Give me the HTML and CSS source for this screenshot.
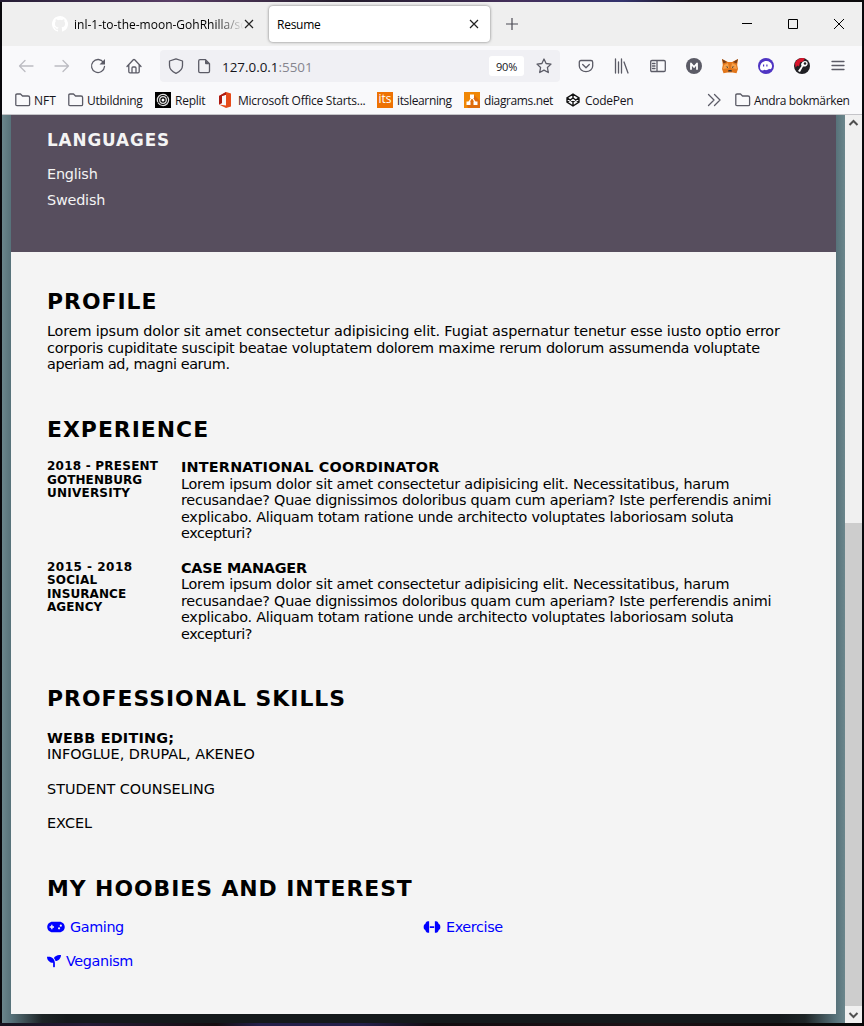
FILE: index.html
```html
<!DOCTYPE html>
<html lang="sv">
<head>
<meta charset="utf-8">
<title>Resume</title>
<link rel="stylesheet" href="styles.css">
</head>
<body>
<div class="window">
  <div class="tabs">
    <div class="tab tab-old">
      <svg class="gh" width="16" height="16" viewBox="0 0 16 16"><path fill="#fff" d="M8 0C3.58 0 0 3.58 0 8c0 3.54 2.29 6.53 5.47 7.59.4.07.55-.17.55-.38v-1.49c-2.23.49-2.7-.95-2.7-.95-.36-.92-.89-1.17-.89-1.17-.73-.5.06-.49.06-.49.8.06 1.22.83 1.22.83.72 1.23 1.88.87 2.34.67.07-.52.28-.87.5-1.07-1.77-.2-3.64-.89-3.64-3.95 0-.87.31-1.59.82-2.15-.08-.2-.36-1.02.08-2.12 0 0 .67-.21 2.2.82a7.7 7.7 0 0 1 4 0c1.53-1.04 2.2-.82 2.2-.82.44 1.1.16 1.92.08 2.12.51.56.82 1.27.82 2.15 0 3.07-1.87 3.75-3.65 3.95.29.25.54.73.54 1.48v2.2c0 .21.15.46.55.38A8 8 0 0 0 8 0z"/></svg>
      <span class="tab-title fade">inl-1-to-the-moon-GohRhilla/sc</span>
      <svg class="x" width="10" height="10" viewBox="0 0 10 10"><path d="M1 1l8 8M9 1L1 9"/></svg>
    </div>
    <div class="tab tab-active">
      <span class="tab-title">Resume</span>
      <svg class="x" width="10" height="10" viewBox="0 0 10 10"><path d="M1 1l8 8M9 1L1 9"/></svg>
    </div>
    <svg class="plus" width="12" height="12" viewBox="0 0 12 12"><path d="M6 0v12M0 6h12"/></svg>
    <div class="controls">
      <svg width="10" height="10" viewBox="0 0 10 10"><path d="M0 4.500h10"/></svg>
      <svg width="10" height="10" viewBox="0 0 10 10"><path d="M.5 .5h9v9h-9z"/></svg>
      <svg width="10" height="10" viewBox="0 0 10 10"><path d="M0 0l10 10M10 0L0 10"/></svg>
    </div>
  </div>
  <div class="nav">
    <svg class="ic dim" viewBox="0 0 16 16"><path d="M15 8H1.500M7 2.500L1.500 8 7 13.500"/></svg>
    <svg class="ic dim" viewBox="0 0 16 16"><path d="M1 8h13.500M9 2.500L14.500 8 9 13.500"/></svg>
    <svg class="ic" viewBox="0 0 16 16"><path d="M13.500 4.500A6.500 6.500 0 1 0 14.500 8.500"/><path class="solid" d="M15 1v5.500H9.500z"/></svg>
    <svg class="ic" viewBox="0 0 16 16"><path d="M1 8.500L7.300 1.800q.7-.6 1.400 0L15 8.500M2.800 7v6.500q0 1.300 1.200 1.300h8q1.200 0 1.200-1.300V7M6 14.500V10q0-1 1-1h2q1 0 1 1v4.500"/></svg>
    <div class="url">
      <svg class="ic" viewBox="0 0 16 16"><path d="M8 .8L14.500 3v4.500q0 5-6.500 7.800Q1.500 12.500 1.500 7.500V3z"/></svg>
      <svg class="ic" viewBox="0 0 16 16"><path d="M9.500 1.600H4q-1.300 0-1.300 1.300v10.400q0 1.300 1.300 1.300h8.200q1.300 0 1.300-1.300V5.600z"/><path class="solid" d="M9 1.500l4.800 4.800H10q-1 0-1-1z"/></svg>
      <span class="addr">127.0.0.1<i>:5501</i></span>
      <span class="zoom">90%</span>
      <svg class="ic" viewBox="0 0 16 16"><path d="M8 1l2.100 4.500 4.900.6-3.600 3.400.9 5L8 12.100l-4.300 2.400.9-5L1 6.100l4.900-.6z"/></svg>
    </div>
    <div class="tools">
      <svg class="ic" viewBox="0 0 16 16"><path d="M3 2.500h10q1.700 0 1.700 1.700V8a6.700 5.700 0 0 1-13.400 0V4.200q0-1.700 1.700-1.700zM4.700 6.500L8 9.700l3.300-3.200"/></svg>
      <svg class="ic" viewBox="0 0 16 16"><path d="M1.500 1v14M4.500 4v11M7.500 1v14M10 4l4 11"/></svg>
      <svg class="ic" viewBox="0 0 16 16"><path d="M2 2.500h12q1.300 0 1.300 1.300v8.400q0 1.300-1.300 1.300H2q-1.300 0-1.300-1.300V3.800q0-1.300 1.300-1.300zM7 2.500v11M2.500 5.500h2.500M2.500 8h2.500M2.500 10.500h2.500"/></svg>
      <svg class="ic" viewBox="0 0 16 16"><circle class="solid" cx="8" cy="8" r="8"/><path class="em" d="M5 11V5.500L8 9l3-3.500V11"/></svg>
      <svg class="ic art" viewBox="0 0 16 16"><path fill="#e2761b" d="M0 1l6 3h4l6-3-.8 6 .8 4-1.500 4.300-4-.8H5.500l-4 .8L0 11l.8-4z"/><path fill="#783d16" d="M0 1l5 3-3.500 1.500zM16 1l-5 3 3.500 1.500z"/><path fill="#f6a04a" d="M2 7l4-2 1 5-6 1zM14 7l-4-2-1 5 6 1z"/><path fill="#333" d="M3.500 8.500l2.500.2v1.200zM12.500 8.500l-2.500.2v1.200zM6.500 12h3l.5 1.500H6z"/></svg>
      <svg class="ic art" viewBox="0 0 16 16"><circle cx="8" cy="8" r="8" fill="#4f35c3"/><path fill="#fff" d="M2 9.500C2 1.500 13 1 14 7.500c.2 3.500-1.800 4.500-3 3.300-1.500 1.700-3.500 1.700-4.500 1-2 1.500-4.500.7-4.500-2.300z"/><path fill="#4f35c3" d="M5 6.500h1.200v2H5zM8.300 6.500h1.200v2H8.300z"/></svg>
      <svg class="ic art" viewBox="0 0 16 16"><circle cx="8" cy="8" r="8" fill="#202024"/><path fill="#d9142b" d="M1 5a8 8 0 0 1 10-4.500L9 3.500l-3 1-1 4-1.500-1-2 2z"/><path fill="#fff" d="M7 6q2-4 6-2.500 2 3-1.500 5L9 8.500 6 14l-2-1 3.500-5z"/><circle cx="11" cy="5.500" r="1.300" fill="#202024"/></svg>
      <svg class="ic" viewBox="0 0 16 16"><path d="M2 3.500h12M2 7.500h12M2 11.500h12"/></svg>
    </div>
  </div>
  <div class="marks">
    <span class="bm b1"><svg class="ic" viewBox="0 0 16 16"><path d="M.8 12.500V3.200q0-1.200 1.200-1.200h3.500L7.500 4H13q1.600 0 1.600 1.500v7q0 1.200-1.300 1.200H2q-1.200 0-1.200-1.200z"/></svg><b>NFT</b></span>
    <span class="bm b2"><svg class="ic" viewBox="0 0 16 16"><path d="M.8 12.500V3.200q0-1.200 1.200-1.200h3.500L7.500 4H13q1.600 0 1.600 1.500v7q0 1.200-1.300 1.200H2q-1.200 0-1.200-1.200z"/></svg><b>Utbildning</b></span>
    <span class="bm b3"><svg class="ic art" viewBox="0 0 16 16"><path fill="#000" d="M0 0h16v16H0z"/><g fill="none" stroke="#ddd" stroke-width="1.300"><circle cx="8" cy="8" r="3.300"/><circle cx="8" cy="8" r="5.600" stroke-dasharray="14 1.500"/></g><circle cx="8" cy="8" r="1.500" fill="#fff"/></svg><b>Replit</b></span>
    <span class="bm b4"><svg class="ic art" viewBox="0 0 16 16"><path fill="#e64a19" d="M2 4l7-4 5 1.500v13L9 16l-7-3.500 7 .9V2.800L5 4v7l-3 1.500z"/><path fill="#ad1a12" d="M2 4l7-4v2.800L5 4v7l-3 1.500z"/></svg><b>Microsoft Office Starts...</b></span>
    <span class="bm b5"><span class="its">its</span><b>itslearning</b></span>
    <span class="bm b6"><svg class="ic art" viewBox="0 0 16 16"><path fill="#f08705" d="M0 0h16v16H0z"/><path fill="#df6c0c" d="M10 3l6 6v7H4l-1-3z"/><path d="M8 5L4.500 11M8 5l3.500 6" stroke="#fff" stroke-width="1.300"/><path fill="#fff" d="M6 2.500h4V6H6zM2.500 9.500h4V13h-4zM9.500 9.500h4V13h-4z"/></svg><b>diagrams.net</b></span>
    <span class="bm b7"><svg class="ic cp" viewBox="0 0 16 16"><path d="M8 2l6 3.800v4.400L8 14l-6-3.800V5.800zM8 2v4M8 14v-4M2 5.800L8 10l6-4.200M2 10.200L8 6l6 4.200"/></svg><b>CodePen</b></span>
    <span class="bm b8"><svg class="ic" viewBox="0 0 16 16"><path d="M2.500 2.500L8 8l-5.500 5.500M8.500 2.500L14 8l-5.500 5.500"/></svg></span>
    <span class="bm b9"><svg class="ic" viewBox="0 0 16 16"><path d="M.8 12.500V3.200q0-1.200 1.200-1.200h3.500L7.500 4H13q1.600 0 1.600 1.500v7q0 1.200-1.300 1.200H2q-1.200 0-1.200-1.200z"/></svg><b>Andra bokmärken</b></span>
  </div>
  <div class="view">
    <div class="canvas">
      <div class="resume">
        <header class="lang">
          <h3>LANGUAGES</h3>
          <p>English</p>
          <p>Swedish</p>
        </header>
        <main>
          <h2 class="h-profile">PROFILE</h2>
          <p class="text"><span class="lead">Lorem ipsum dolor sit amet consectetur adipisicing elit. Fugiat aspernatur tenetur esse iusto optio error</span><br>corporis cupiditate suscipit beatae voluptatem dolorem maxime rerum dolorum assumenda voluptate<br><span class="end">aperiam ad, magni earum.</span></p>
          <h2 class="h-exp">EXPERIENCE</h2>
          <div class="job">
            <h5>2018 - PRESENT<br><span class="snug">GOTHENBURG</span><br>UNIVERSITY</h5>
            <div><h4>INTERNATIONAL COORDINATOR</h4>
            <p class="text">Lorem ipsum dolor sit amet consectetur adipisicing elit. Necessitatibus, harum<br>recusandae? Quae dignissimos doloribus quam cum aperiam? Iste perferendis animi<br>explicabo. Aliquam totam ratione unde architecto voluptates laboriosam soluta<br><span class="end">excepturi?</span></p></div>
          </div>
          <div class="job">
            <h5><span class="years">2015 - 2018</span><br>SOCIAL<br><span class="snug">INSURANCE</span><br><span class="snug">AGENCY</span></h5>
            <div><h4 class="case">CASE MANAGER</h4>
            <p class="text">Lorem ipsum dolor sit amet consectetur adipisicing elit. Necessitatibus, harum<br>recusandae? Quae dignissimos doloribus quam cum aperiam? Iste perferendis animi<br>explicabo. Aliquam totam ratione unde architecto voluptates laboriosam soluta<br><span class="end">excepturi?</span></p></div>
          </div>
          <h2 class="h-skill">PROFESSIONAL SKILLS</h2>
          <h4>WEBB EDITING;</h4>
          <p class="skill">INFOGLUE, DRUPAL, AKENEO</p>
          <p class="skill">STUDENT COUNSELING</p>
          <p class="skill">EXCEL</p>
          <h2 class="h-hob">MY HOOBIES AND INTEREST</h2>
          <div class="hobbies">
            <a><svg width="18" height="14" viewBox="0 0 640 512"><path fill-rule="evenodd" d="M448 64H192C86 64 0 150 0 256s86 192 192 192h256c106 0 192-86 192-192S554 64 448 64zM247 280h-55v56h-48v-56H88v-48h56v-56h48v56h55zM432 344a40 40 0 1 1 0-80 40 40 0 1 1 0 80zM496 248a40 40 0 1 1 0-80 40 40 0 1 1 0 80z"/></svg>Gaming</a>
            <a><svg width="18" height="14" viewBox="0 0 640 512"><path d="M215 50h-40c-70 10-85 50-100 100-40 10-60 40-60 106s20 96 60 106c15 50 30 90 100 100h40zM425 50h40c70 10 85 50 100 100 40 10 60 40 60 106s-20 96-60 106c-15 50-30 90-100 100h-40zM240 224h160v64H240z"/></svg>Exercise</a>
            <a><svg width="14" height="14" viewBox="0 0 512 512"><path d="M64 96H0c0 124 100 224 224 224v144c0 9 7 16 16 16h32c9 0 16-7 16-16V320C288 196 188 96 64 96zM448 32c-84 0-157 47-196 115 28 31 49 69 60 110C424 245 512 149 512 32z"/></svg>Veganism</a>
          </div>
        </main>
      </div>
    </div>
    <div class="scroll">
      <svg width="17" height="17" viewBox="0 0 17 17"><path d="M4.500 10l4-4 4 4"/></svg>
      <div class="thumb"></div>
      <svg width="17" height="17" viewBox="0 0 17 17"><path d="M4.500 7l4 4 4-4"/></svg>
    </div>
  </div>
</div>
</body>
</html>
```

FILE: styles.css
```css
* { box-sizing: border-box; margin: 0; padding: 0; }
body { width: 864px; height: 1026px; padding: 2px; overflow: hidden; background: linear-gradient(90deg, #241c34, #593e66 20%, #241c2c 40%, #44305c 60%, #33336e 72%, #1c1218 80%, #0b0a0c) 0 0 / 100% 2px no-repeat, linear-gradient(90deg, #17131f, #241b36 10%, #150d10 25%, #24204a 30%, #24204a 42%, #120c10 50%, #1c1216 75%, #060606) 0 100% / 100% 3px no-repeat, #09080c; font-family: "DejaVu Sans", sans-serif; }
.window { width: 860px; height: 1021px; display: flex; flex-direction: column; }
svg { flex: none; display: block; }

/* Browser chrome */
.tabs, .nav, .marks { font: 12px "Open Sans", "Noto Sans", sans-serif; color: #15141a; display: flex; align-items: center; flex: none; white-space: nowrap; }
.tabs { height: 44px; background: #efefef; }
.tab { display: flex; align-items: center; height: 36px; }
.tab-old { width: 267px; padding-left: 50px; }
.tab-title { flex: 1; min-width: 0; color: #000; padding-top: 1px; }
.fade { flex: 0 0 170px; width: 170px; margin: 0 0 0 6px; overflow: hidden; -webkit-mask: linear-gradient(90deg, #000 83%, transparent); mask: linear-gradient(90deg, #000 83%, transparent); }
.x { fill: none; stroke: #222; stroke-width: 1.2; }
.tab-active { width: 221px; padding: 0 11px 0 8px; background: #fff; border-radius: 4px; box-shadow: 0 0 3px rgba(0,0,0,.5); }
.tab-active .tab-title { letter-spacing: -.25px; }
.plus { margin-left: 16px; stroke: #4b4a54; stroke-width: 1.2; }
.controls { margin-left: auto; display: flex; gap: 36px; padding-right: 18px; }
.controls svg { fill: none; stroke: #000; stroke-width: 1; overflow: visible; }
.ic { width: 16px; height: 16px; fill: none; stroke: #5b5b66; stroke-width: 1.3; stroke-linejoin: round; stroke-linecap: round; }
.ic .solid { fill: #5b5b66; stroke: none; }
.em { stroke: #fff; stroke-width: 1.8; }
.dim { stroke: #bcbcc2; }
.art { stroke: none; }
.nav { height: 40px; background: #f9f9fb; padding-left: 16px; gap: 20px; }
.url { height: 32px; width: 400px; margin-left: -2px; background: #f0f0f4; border-radius: 4px; display: flex; align-items: center; padding: 0 8px; }
.url .ic + .ic { margin-left: 12px; }
.addr { font-size: 13.4px; margin-left: 10px; padding-top: 2px; flex: 1; }
.addr i { font-style: normal; color: #85858e; }
.zoom { width: 35px; height: 20px; line-height: 22px; margin-right: 12px; text-align: center; font-size: 11px; letter-spacing: -.2px; background: #fff; border-radius: 3px; }
.tools { display: flex; gap: 20px; margin-left: -2px; }
.marks { height: 29px; background: #f9f9fb; border-bottom: 1px solid #c4c4c8; padding: 0 13px; }
.bm { display: flex; align-items: center; gap: 4px; flex: none; letter-spacing: -.25px; }
.bm b { font-weight: 400; padding-top: 1px; }
.b1 { width: 53px; gap: 3px; letter-spacing: 0; }
.b2 { width: 87px; gap: 3px; }
.b3 { width: 62px; }
.b4 { width: 160px; gap: 5px; }
.b5 { width: 87px; letter-spacing: -.35px; }
.b6 { width: 101px; letter-spacing: -.38px; }
.b7 { width: 141px; }
.b8 { width: 29px; }
.b9 { letter-spacing: -.36px; gap: 3px; }
.its { width: 16px; height: 16px; line-height: 14px; text-align: center; font-size: 12px; letter-spacing: 0; color: #fff; background: #ee7203; }
.cp { stroke: #111; stroke-width: 1.4; }

/* Page viewport */
.view { flex: 1; min-height: 0; display: flex; }
.canvas { width: 843px; padding: 0 9px 9px; background: linear-gradient(90deg, #6b868c, #57727a 9px, #1d2426 40px, #14191b 65px, #14191b 778px, #1d2426 803px, #57727a 834px, #6b868c); }
.resume { height: 899px; background: #f4f4f4; }
.lang { height: 137px; padding: 15px 36px 0; background: #574e5e; color: #f4f4f4; }
.lang h3 { font-size: 16.8px; line-height: 20px; letter-spacing: .9px; margin-bottom: 11px; }
.lang p { font-size: 14.4px; line-height: 26px; letter-spacing: -.2px; }
main { padding: 36px 36px 0; color: #000; white-space: nowrap; }
h2 { font-size: 21.9px; line-height: 28px; letter-spacing: 1px; }
h4 { font-size: 14.4px; line-height: 16.5px; letter-spacing: .2px; }
.case { letter-spacing: -.2px; }
.text, .skill { font-size: 14.4px; line-height: 16.5px; }
.text { letter-spacing: -.24px; }
.lead { letter-spacing: -.145px; }
.end { letter-spacing: -.4px; }
.h-profile { margin-bottom: 7px; }
.h-exp { margin: 43.5px 0 15px; }
.job { display: grid; grid-template-columns: 134px 1fr; height: 82.5px; margin-bottom: 18px; }
h5 { font-size: 12px; line-height: 13.6px; padding-top: 1px; letter-spacing: .23px; }
.years { letter-spacing: .5px; }
.snug { letter-spacing: .08px; }
.h-skill { margin: 43.3px 0 16.5px; }
.skill + .skill { margin-top: 17.8px; }
.h-hob { margin: 43.5px 0 15.7px; letter-spacing: .95px; }
.hobbies { display: grid; grid-template-columns: 376px 1fr; row-gap: 17.5px; }
.hobbies a { display: flex; align-items: center; gap: 5px; height: 16.5px; font-size: 14.4px; line-height: 16.5px; letter-spacing: -.4px; color: #00f; fill: #00f; }

.scroll { width: 17px; display: flex; flex-direction: column; background: #f0f0f0; }
.scroll svg { fill: none; stroke: #505050; stroke-width: 2; }
.thumb { height: 483px; margin-top: auto; background: #cdcdcd; }
```
